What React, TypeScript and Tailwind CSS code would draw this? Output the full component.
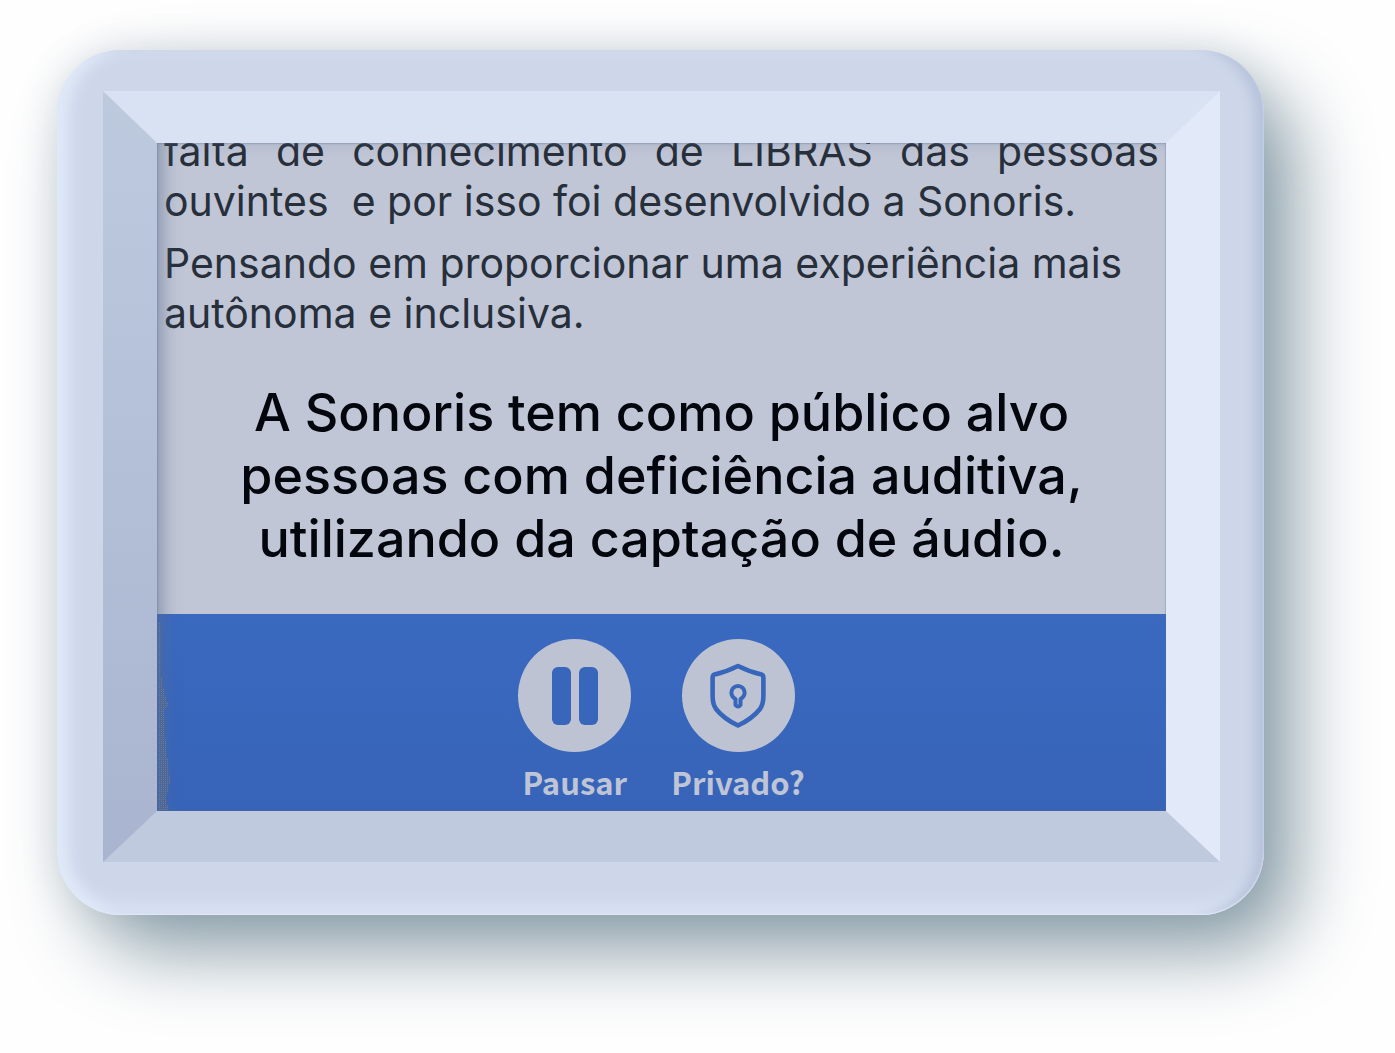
import type { ReactNode } from "react";

const PauseIcon = () => (
    <svg viewBox="0 0 46 58" className="h-[58px] w-[46px]" fill="#3866bb" aria-hidden="true">
        <rect x="0" y="0" width="19" height="58" rx="6" />
        <rect x="27" y="0" width="19" height="58" rx="6" />
    </svg>
);

const ShieldIcon = () => (
    <svg viewBox="0 0 56 66" className="h-[66px] w-[56px]" fill="none" stroke="#3866bb" strokeWidth="4.6" strokeLinejoin="round" strokeLinecap="round" aria-hidden="true">
        <path d="M28 3 Q16 9 4.5 11.5 Q2.6 12 2.6 15 V33 Q2.6 41 6 46 Q14 56 28 62.5 Q42 56 50 46 Q53.4 41 53.4 33 V15 Q53.4 12 51.5 11.5 Q40 9 28 3 Z" />
        <path d="M25.5 42 V36 Q21.4 34 21.4 29.5 A6.6 6.6 0 0 1 34.6 29.5 Q34.6 34 30.5 36 V42 Q28 45 25.5 42 Z" strokeWidth="4" />
    </svg>
);

const ControlButton = ({ label, children }: { label: string; children: ReactNode }) => (
    <button type="button" className="flex flex-col items-center text-[#bfc5d6]">
        <span className="flex size-[113px] items-center justify-center rounded-full bg-[#bdc3d3]">
            {children}
        </span>
        <span className="mt-[10px] font-['Noto_Sans_CJK_SC',sans-serif] text-[31px] leading-[40px] font-bold">
            {label}
        </span>
    </button>
);

// Shading along the left edge of the screen, with the worn strip beside the controls
const ScreenShade = () => (
    <div className="pointer-events-none absolute inset-0 flex items-end shadow-[inset_14px_3px_18px_-9px_#5c6c8990,inset_0_0_2px_#5a6f9a]">
        <svg viewBox="0 0 15 188" className="h-[188px] w-[15px] opacity-75" aria-hidden="true">
            <defs>
                <pattern id="grain" width="2" height="2" patternUnits="userSpaceOnUse">
                    <rect width="1" height="1" fill="#85817c" />
                    <rect x="1" y="1" width="1" height="1" fill="#66686f" />
                </pattern>
            </defs>
            <path d="M2 0 H4 L4 50 L7 68 L11 82 L7 88 L9 125 L12 145 L13 160 L9 174 L12 187 H2 Z" fill="url(#grain)" shapeRendering="crispEdges" />
        </svg>
    </div>
);

const App = () => {
    return (
        <main className="min-h-screen overflow-hidden bg-[#fefefe] pt-[50px] pr-[131px] pb-[138px] pl-[57px] font-['Inter',sans-serif]">
            <div className="rounded-[64px] bg-[#ced7ea] pt-[41px] pr-[44px] pb-[53px] pl-[46px] shadow-[32px_38px_80px_-4px_#8499a4,0_0_40px_#dfe4e8,0_0_3px_#ffffff,inset_0_-1px_2px_#e3eaf8,inset_-14px_0_12px_-4px_#b7c3db,inset_14px_0_14px_-2px_#e0e9f8,inset_0_-16px_16px_-4px_#d8e1f3]">
                <div className="bg-linear-to-b from-[#bdcade] to-[#a9b5d0]">
                    <div className="border-t-[52px] border-r-[54px] border-b-[51px] border-l-[54px] border-t-[#d8e2f3] border-r-[#e2e9f8] border-b-[#bfcade] border-l-transparent">
                        <div className="relative overflow-hidden bg-[#c0c6d6]">
                            <section className="px-[7px] pb-11">
                                <div className="-mt-[17px] space-y-3 text-[41px] leading-[50px] text-[#272f3b]">
                                    <p className="text-justify">
                                        falta de conhecimento de LIBRAS das pessoas ouvintes&nbsp; e por isso foi desenvolvido a Sonoris.
                                    </p>
                                    <p>Pensando em proporcionar uma experiência mais autônoma e inclusiva.</p>
                                </div>
                                <h1 className="mx-auto mt-[43px] max-w-[880px] text-center text-[52px] leading-[63px] font-medium text-[#03060c]">
                                    A Sonoris tem como público alvo pessoas com deficiência auditiva, utilizando da captação de áudio.
                                </h1>
                            </section>
                            <div className="flex justify-center gap-10 bg-linear-to-b from-[#3a69c0] to-[#3764b8] pt-[25px] pb-[9px]">
                                <ControlButton label="Pausar">
                                    <PauseIcon />
                                </ControlButton>
                                <ControlButton label="Privado?">
                                    <ShieldIcon />
                                </ControlButton>
                            </div>
                            <ScreenShade />
                        </div>
                    </div>
                </div>
            </div>
        </main>
    );
};

export default App;
